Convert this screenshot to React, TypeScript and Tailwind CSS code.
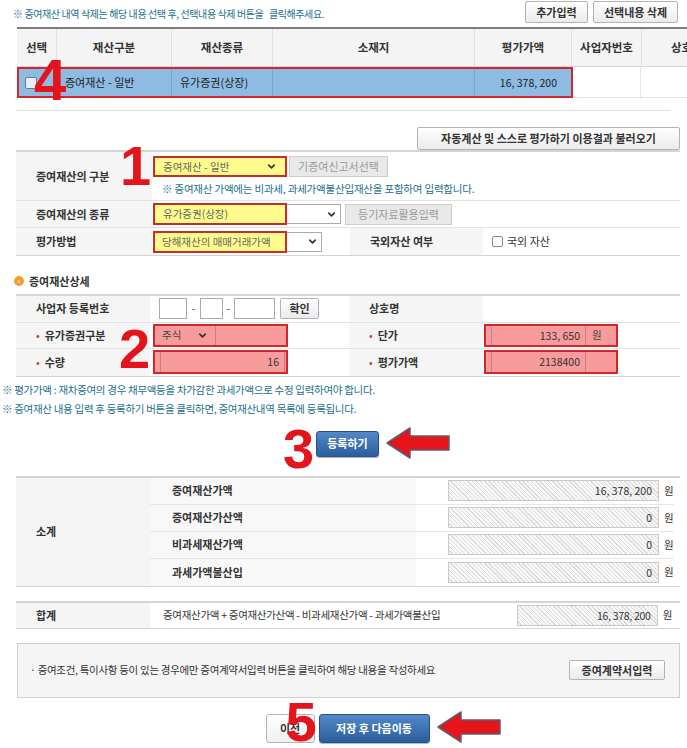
import { ChevronDown } from 'lucide-react';
import type { ReactNode } from 'react';

// annotation numbers painted over the screenshot
function Mark({ n, className }: { n: string; className: string }) {
  return (
    <span
      className={`pointer-events-none absolute origin-left font-['Liberation_Sans',sans-serif] text-[56px] leading-none font-bold text-[#e3141b] ${className}`}
    >
      {n}
    </span>
  );
}

function Arrow({ className }: { className: string }) {
  return (
    <svg className={`absolute ${className}`} width="66" height="34" viewBox="0 0 66 34">
      <polygon points="2,17 25,2 25,10 64,10 64,24 25,24 25,32" fill="#e8141b" stroke="#5a5f6e" strokeWidth="1.5" strokeLinejoin="round" />
    </svg>
  );
}

function GrayBtn({ children, className = '' }: { children: ReactNode; className?: string }) {
  return (
    <div
      className={`flex items-center justify-center rounded-[2px] border border-[#b3b3b3] bg-linear-to-b from-white to-[#ebebeb] text-[11px] font-bold text-[#333] ${className}`}
    >
      {children}
    </div>
  );
}

function OffBtn({ children, className = '' }: { children: ReactNode; className?: string }) {
  return (
    <div className={`flex h-[21px] items-center justify-center border border-[#cdcdcd] bg-[#e9e9e9] text-[11px] text-[#9a9a9a] ${className}`}>
      {children}
    </div>
  );
}

function BlueBtn({ children, className = '' }: { children: ReactNode; className?: string }) {
  return (
    <div
      className={`flex items-center justify-center rounded-[3px] border border-[#23528c] bg-linear-to-b from-[#5389c6] to-[#2a5e9d] text-[11px] font-bold text-white shadow-[0_1px_1px_rgba(0,0,0,0.3)] ${className}`}
    >
      {children}
    </div>
  );
}

function Chevron() {
  return <ChevronDown size={11} strokeWidth={3.5} className="text-[#333]" />;
}

function Hatch({ value, w }: { value: string; w: string }) {
  return (
    <div className="flex items-center">
      <div
        className={`h-[21px] ${w} border border-[#c9c9c9] bg-[repeating-linear-gradient(45deg,#f8f8f8_0px,#f8f8f8_2px,#dcdcdc_2px,#dcdcdc_3px)] pr-[6px] text-right text-[10.5px] leading-[19px] text-[#333]`}
      >
        {value}
      </div>
      <span className="ml-[5px] text-[10.5px] text-[#333]">원</span>
    </div>
  );
}

const label = 'flex items-center bg-[#f5f5f5] pl-[20px] text-[11px] font-bold text-[#333]';
const req = <span className="mr-[5px] text-[#d43a3a]">•</span>;

export default function App() {
  const heads = [
    ['선택', 'w-[40px]'],
    ['재산구분', 'w-[115px]'],
    ['재산종류', 'w-[101px]'],
    ['소재지', 'w-[202px]'],
    ['평가가액', 'w-[97px]'],
    ['사업자번호', 'w-[70px]'],
    ['상호', 'w-[80px]'],
  ];
  const sums = [
    ['증여재산가액', '16, 378, 200'],
    ['증여재산가산액', '0'],
    ['비과세재산가액', '0'],
    ['과세가액불산입', '0'],
  ];

  return (
    <div className="relative h-[748px] w-[687px] overflow-hidden bg-white font-['Noto_Sans_CJK_KR','Noto_Sans',sans-serif] text-[#333]">
      {/* list of gift assets */}
      <div className="flex h-[23px] items-end">
        <p className="pb-[2px] pl-[13px] text-[10px] tracking-[-0.4px] text-[#22708c]">
          ※ 증여재산 내역 삭제는 해당 내용 선택 후, 선택내용 삭제 버튼을&nbsp;&nbsp; 클릭해주세요.
        </p>
        <div className="ml-auto flex gap-[5px] pr-[9px]">
          <GrayBtn className="h-[22px] w-[63px]">추가입력</GrayBtn>
          <GrayBtn className="h-[22px] w-[85px]">선택내용 삭제</GrayBtn>
        </div>
      </div>

      <div className="mt-[4px] ml-[17px] w-[705px] border-t-2 border-[#7d7d7d]">
        <div className="flex h-[38px] border-b border-[#d8d8d8] bg-[#f4f4f4]">
          {heads.map(([t, w]) => (
            <div key={t} className={`${w} flex shrink-0 items-center justify-center border-r border-[#e0e0e0] text-[11.5px] font-bold text-[#333]`}>
              {t}
            </div>
          ))}
        </div>
        <div className="relative flex h-[31px]">
          <div className="flex border-2 border-[#d3262c] bg-[#8dbbe2] text-[11px] text-[#222]">
            <div className="flex w-[38px] items-center justify-start border-r border-[#79a6cf] pl-[6px]">
              <span className="h-[12px] w-[12px] rounded-[2px] border border-[#777] bg-[#e8eef5]" />
            </div>
            <div className="flex w-[115px] items-center border-r border-[#79a6cf] pl-[8px]">증여재산 - 일반</div>
            <div className="flex w-[101px] items-center border-r border-[#79a6cf] pl-[8px]">유가증권(상장)</div>
            <div className="w-[202px] border-r border-[#79a6cf]" />
            <div className="flex w-[96px] items-center justify-end pr-[14px] text-[10.5px]">16, 378, 200</div>
          </div>
          <div className="w-[68px] border-r border-b border-[#e3e3e3]" />
          <div className="w-[80px] border-b border-[#e3e3e3]" />
          <Mark n="4" className="top-[-16px] left-[17px] text-[58px]" />
        </div>
      </div>
      <div className="mx-[16px] mt-[12px] border-b border-[#dedede]" />

      {/* input form */}
      <div className="mt-[16px] flex justify-end pr-[7px]">
        <GrayBtn className="h-[23px] w-[263px] text-[11.5px]">자동계산 및 스스로 평가하기 이용결과 불러오기</GrayBtn>
      </div>

      <div className="ml-[16px] w-[664px] border-t-2 border-b border-t-[#d4d4d4] border-b-[#d4d4d4]">
        <div className="relative flex h-[49px] border-b border-[#e3e3e3]">
          <div className={`${label} w-[136px]`}>증여재산의 구분</div>
          <div className="flex flex-col pt-[4px] pl-[1px]">
            <div className="flex items-center gap-[2px]">
              <div className="flex h-[21px] w-[134px] items-center justify-between border-2 border-[#cf2a2a] bg-[#fdfc8c] pr-[8px] pl-[8px] text-[10.5px] text-[#666]">
                증여재산 - 일반
                <Chevron />
              </div>
              <OffBtn className="w-[99px]">기증여신고서선택</OffBtn>
            </div>
            <p className="mt-[4px] pl-[9px] text-[10.5px] tracking-[-0.2px] text-[#22708c]">
              ※ 증여재산 가액에는 비과세, 과세가액불산입재산을 포함하여 입력합니다.
            </p>
          </div>
          <Mark n="1" className="top-[-14px] left-[104px]" />
        </div>
        <div className="flex h-[27px] border-b border-[#e3e3e3]">
          <div className={`${label} w-[136px]`}>증여재산의 종류</div>
          <div className="flex items-center pl-[1px]">
            <div className="flex h-[22px] w-[134px] items-center border-2 border-[#cf2a2a] bg-[#fdfc8c] pl-[8px] text-[10.5px] text-[#666]">
              유가증권(상장)
            </div>
            <div className="flex h-[20px] w-[54px] items-center justify-end border-y border-r border-[#aaa] pr-[3px]">
              <Chevron />
            </div>
            <OffBtn className="ml-[4px] w-[107px]">등기자료활용입력</OffBtn>
          </div>
        </div>
        <div className="flex h-[27px]">
          <div className={`${label} w-[136px]`}>평가방법</div>
          <div className="flex w-[198px] items-center pl-[1px]">
            <div className="flex h-[22px] w-[134px] items-center border-2 border-[#cf2a2a] bg-[#fdfc8c] pl-[7px] text-[10.5px] text-[#666]">
              당해재산의 매매거래가액
            </div>
            <div className="flex h-[20px] w-[35px] items-center justify-end border-y border-r border-[#aaa] pr-[3px]">
              <Chevron />
            </div>
          </div>
          <div className={`${label} w-[133px]`}>국외자산 여부</div>
          <div className="flex items-center gap-[4px] pl-[9px] text-[11px]">
            <span className="h-[11px] w-[11px] rounded-[2px] border border-[#888] bg-white" />
            국외 자산
          </div>
        </div>
      </div>

      {/* asset detail */}
      <div className="mt-[17px] flex items-center gap-[5px] pl-[14px]">
        <span className="flex h-[10px] w-[10px] items-center justify-center rounded-full bg-[#f0a12f] text-[7px] leading-none font-bold text-white">›</span>
        <span className="text-[11px] font-bold text-[#333]">증여재산상세</span>
      </div>

      <div className="mt-[4px] ml-[16px] w-[664px] border-t-2 border-b border-t-[#d4d4d4] border-b-[#d4d4d4]">
        <div className="flex h-[27px] border-b border-[#e3e3e3]">
          <div className={`${label} w-[134px]`}>사업자 등록번호</div>
          <div className="flex w-[199px] items-center pl-[9px] text-[11px] text-[#555]">
            <span className="h-[21px] w-[28px] border border-[#aaa]" />
            <span className="w-[13px] text-center">-</span>
            <span className="h-[21px] w-[23px] border border-[#aaa]" />
            <span className="w-[11px] text-center">-</span>
            <span className="h-[21px] w-[41px] border border-[#aaa]" />
            <GrayBtn className="ml-[5px] h-[21px] w-[39px] from-[#f4f4f4] to-[#e4e4e4]">확인</GrayBtn>
          </div>
          <div className={`${label} w-[134px]`}>상호명</div>
          <div className="flex-1" />
        </div>
        <div className="relative flex h-[26px] border-b border-[#e3e3e3]">
          <div className={`${label} w-[134px] pl-[18px] font-normal`}>
            {req}
            <b>유가증권구분</b>
          </div>
          <div className="flex w-[199px] items-center pl-[3px]">
            <div className="flex h-[23px] w-[135px] items-center border-2 border-[#d0262c] bg-[#f79b9c]">
              <div className="flex h-full w-[61px] items-center justify-between border-r border-[#d47c7d] pr-[7px] pl-[7px] text-[10.5px] text-[#444]">
                주식
                <Chevron />
              </div>
            </div>
          </div>
          <div className={`${label} w-[134px] pl-[10px] font-normal`}>
            {req}
            <b>단가</b>
          </div>
          <div className="flex items-center pl-[1px]">
            <div className="flex h-[23px] w-[134px] items-center border-2 border-[#d0262c] bg-[#f79b9c] pl-[5px]">
              <div className="h-full w-[95px] border-x border-[#d47c7d] pr-[5px] text-right text-[10.5px] leading-[19px] text-[#333]">133, 650</div>
              <span className="ml-[6px] text-[10.5px] text-[#444]">원</span>
            </div>
          </div>
          <Mark n="2" className="top-[-2px] left-[103px]" />
        </div>
        <div className="flex h-[27px]">
          <div className={`${label} w-[134px] pl-[18px] font-normal`}>
            {req}
            <b>수량</b>
          </div>
          <div className="flex w-[199px] items-center pl-[3px]">
            <div className="flex h-[24px] w-[135px] items-center border-2 border-[#d0262c] bg-[#f79b9c] pl-[5px]">
              <div className="h-full w-[125px] border-x border-[#d47c7d] pr-[5px] text-right text-[10.5px] leading-[20px] text-[#333]">16</div>
            </div>
          </div>
          <div className={`${label} w-[134px] pl-[10px] font-normal`}>
            {req}
            <b>평가가액</b>
          </div>
          <div className="flex items-center pl-[1px]">
            <div className="flex h-[24px] w-[134px] items-center border-2 border-[#d0262c] bg-[#f79b9c] pl-[5px]">
              <div className="h-full w-[95px] border-x border-[#d47c7d] pr-[5px] text-right text-[10.5px] leading-[20px] text-[#333]">2138400</div>
            </div>
          </div>
        </div>
      </div>

      <div className="mt-[3px] pl-[2px] text-[10.5px] leading-[19px] tracking-[-0.3px] text-[#22708c]">
        <p>※ 평가가액 : 재차증여의 경우 채무액등을 차가감한 과세가액으로 수정 입력하여야 합니다.</p>
        <p>※ 증여재산 내용 입력 후 등록하기 버튼을 클릭하면, 증여재산내역 목록에 등록됩니다.</p>
      </div>

      <div className="mt-[13px] flex justify-center pl-[8px]">
        <div className="relative">
          <BlueBtn className="h-[26px] w-[63px]">등록하기</BlueBtn>
          <Mark n="3" className="top-[-10px] left-[-33px]" />
          <Arrow className="top-[-5px] left-[69px]" />
        </div>
      </div>

      {/* totals */}
      <div className="mt-[19px] ml-[16px] flex w-[664px] border-t-2 border-b border-t-[#d4d4d4] border-b-[#d4d4d4]">
        <div className={`${label} w-[134px]`}>소계</div>
        <div className="flex flex-col">
          {sums.map(([t, v], i) => (
            <div key={t} className={`flex h-[27px] ${i < 3 ? 'border-b border-[#e6e6e6]' : ''}`}>
              <div className="flex w-[266px] items-center bg-[#f8f8f8] pl-[22px] text-[11px] font-bold">{t}</div>
              <div className="flex items-center pl-[32px]">
                <Hatch value={v} w="w-[211px]" />
              </div>
            </div>
          ))}
        </div>
      </div>

      <div className="mt-[14px] ml-[16px] flex h-[28px] w-[664px] border-t-2 border-b border-t-[#d4d4d4] border-b-[#d4d4d4]">
        <div className={`${label} w-[134px]`}>합계</div>
        <div className="flex flex-1 items-center pl-[13px] text-[10.5px] tracking-[-0.3px]">
          증여재산가액 + 증여재산가산액 - 비과세재산가액 - 과세가액불산입
          <div className="ml-auto pr-[8px]">
            <Hatch value="16, 378, 200" w="w-[141px]" />
          </div>
        </div>
      </div>

      <div className="mt-[14px] ml-[17px] flex h-[55px] w-[663px] items-center border border-[#cfcfcf] bg-[#f5f5f5] pr-[14px] pl-[12px]">
        <p className="text-[10.5px] tracking-[-0.3px] text-[#333]">
          · 증여조건, 특이사항 등이 있는 경우에만 증여계약서입력 버튼을 클릭하여 해당 내용을 작성하세요
        </p>
        <GrayBtn className="ml-auto h-[20px] w-[96px]">증여계약서입력</GrayBtn>
      </div>

      <div className="mt-[16px] flex justify-center gap-[4px] pl-[8px]">
        <div className="relative">
          <GrayBtn className="h-[29px] w-[49px] rounded-[3px] from-white to-[#f0f0f0]">이전</GrayBtn>
          <Mark n="5" className="top-[-20px] left-[20px]" />
        </div>
        <div className="relative">
          <BlueBtn className="h-[29px] w-[111px]">저장 후 다음이동</BlueBtn>
          <Arrow className="top-[-4px] left-[117px]" />
        </div>
      </div>
    </div>
  );
}
